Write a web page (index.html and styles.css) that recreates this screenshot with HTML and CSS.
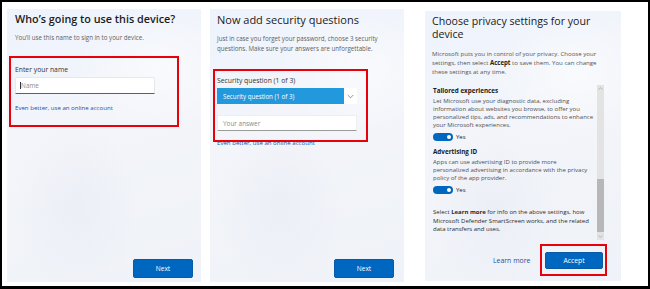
FILE: index.html
```html
<!DOCTYPE html>
<html>
<head>
<meta charset="utf-8">
<link rel="stylesheet" href="styles.css">
</head>
<body>
<div class="frame">
  <section class="panel p1">
    <h1 class="title t1">Who’s going to use this device?</h1>
    <p class="sub s1">You’ll use this name to sign in to your device.</p>
    <div class="field1">
      <label class="label">Enter your name</label>
      <div class="input active"><span class="caret"></span><span class="ph">Name</span></div>
      <a class="link">Even better, use an online account</a>
    </div>
    <div class="foot"><button class="btn">Next</button></div>
    <div class="hl hl1"></div>
  </section>

  <section class="panel p2">
    <h1 class="title t2">Now add security questions</h1>
    <p class="sub s2">Just in case you forget your password, choose 3 security<br>questions. Make sure your answers are unforgettable.</p>
    <div class="field2">
      <label class="label">Security question (1 of 3)</label>
      <div class="select">
        <span class="sel-val">Security question (1 of 3)</span>
        <span class="sel-chev"><svg width="7" height="5" viewBox="0 0 7 5"><path d="M0.7 1 L3.5 3.8 L6.3 1" fill="none" stroke="#777" stroke-width="0.8"/></svg></span>
      </div>
      <div class="input answer"><span class="ph">Your answer</span></div>
      <a class="link l2">Even better, use an online account</a>
    </div>
    <div class="foot"><button class="btn">Next</button></div>
    <div class="hl hl2"></div>
  </section>

  <section class="panel p3">
    <h1 class="title t3">Choose privacy settings for your<br>device</h1>
    <p class="sub s3">Microsoft puts you in control of your privacy. Choose your<br>settings, then select <b>Accept</b> to save them. You can change<br>these settings at any time.</p>
    <div class="scroll">
      <div class="scroll-content">
        <h2 class="opt-title">Tailored experiences</h2>
        <p class="opt-desc">Let Microsoft use your diagnostic data, excluding<br>information about websites you browse, to offer you<br>personalized tips, ads, and recommendations to enhance<br>your Microsoft experiences.</p>
        <div class="toggle-row"><span class="toggle"><span class="knob"></span></span><span class="yes">Yes</span></div>
        <h2 class="opt-title ad">Advertising ID</h2>
        <p class="opt-desc">Apps can use advertising ID to provide more<br>personalized advertising in accordance with the privacy<br>policy of the app provider.</p>
        <div class="toggle-row"><span class="toggle"><span class="knob"></span></span><span class="yes">Yes</span></div>
        <p class="note">Select <b>Learn more</b> for info on the above settings, how<br>Microsoft Defender SmartScreen works, and the related<br>data transfers and uses.</p>
      </div>
      <div class="scrollbar">
        <span class="arrow up"><svg width="5" height="3" viewBox="0 0 5 3"><path d="M0.5 2.6 L2.5 0.6 L4.5 2.6" fill="none" stroke="#999" stroke-width="0.6"/></svg></span>
        <span class="track"></span>
        <span class="thumb"></span>
        <span class="arrow down"><svg width="5" height="3" viewBox="0 0 5 3"><path d="M0.5 0.4 L2.5 2.4 L4.5 0.4" fill="none" stroke="#999" stroke-width="0.6"/></svg></span>
      </div>
    </div>
    <div class="foot3">
      <a class="learn">Learn more</a>
      <button class="btn accept">Accept</button>
    </div>
    <div class="hl hl3"></div>
  </section>
</div>
</body>
</html>
```

FILE: styles.css
```css
* { box-sizing: border-box; margin: 0; padding: 0; }
html, body { width: 650px; height: 289px; background: #fff; }
body {
  font-family: "Open Sans", "Noto Sans", sans-serif;
  color: #1b1b1b;
  overflow: hidden;
}
.frame {
  width: 650px;
  height: 289px;
  border: 2px solid #000;
  border-bottom-width: 3px;
  display: flex;
  align-items: flex-start;
  padding-left: 5px;
}
.panel {
  position: relative;
  display: flex;
  flex-direction: column;
  background:
    radial-gradient(ellipse 120px 90px at 150px 60px, rgba(255,255,255,0.55), rgba(255,255,255,0) 70%),
    radial-gradient(ellipse 90px 120px at 70px 200px, rgba(235,238,245,0.9), rgba(235,238,245,0) 70%),
    linear-gradient(160deg, #eef3fc 0%, #f3f5fa 45%, #eff2f8 100%);
}
.p1 { width: 194px; height: 273px; margin-top: 7px; padding: 0 8px 4px 8px; }
.p2 { width: 194px; height: 273px; margin-top: 7px; margin-left: 9px; padding: 0 10px 4px 7px; }
.p3 { width: 196px; height: 270px; margin-top: 9px; margin-left: 21px; padding: 0 17px 0 7px; }

.title { font-weight: 600; color: #1a1a1a; letter-spacing: 0; white-space: nowrap; }
.t1 { font-size: 10.8px; line-height: 13px; margin-top: 3px; }
.t2 { font-size: 11px; line-height: 14px; margin-top: 4px; font-weight: 500; }
.t3 { font-size: 10.6px; line-height: 13px; margin-top: 4px; font-weight: 500; }

.sub { color: #606060; font-size: 6.2px; white-space: nowrap; }
.s1 { margin-top: 9px; line-height: 8px; }
.s2 { margin-top: 7px; line-height: 10px; }
.s3 { margin-top: 8px; line-height: 9px; font-size: 6.1px; color: #555; }
.sub b { color: #222; }

.label { display: block; font-size: 6.8px; line-height: 9px; color: #333; }
.field1 { margin-top: 23px; }
.input {
  background: #fff;
  border: 1px solid #e6e8ec;
  border-bottom: 1px solid #8a8a8a;
  display: flex;
  align-items: center;
  padding-left: 4px;
  font-size: 6.4px;
  color: #8a8a8a;
}
.field1 .input { width: 140px; height: 17px; margin-top: 3px; border-bottom: 1.5px solid #1a6fc4; border-radius: 2px 2px 0 0; }
.caret { width: 0.6px; height: 7px; background: #333; margin-right: 0.5px; }
.link { display: block; color: #1950a0; font-size: 6.1px; line-height: 8px; white-space: nowrap; }
.field1 .link { margin-top: 10px; }

.field2 { margin-top: 22px; }
.select { display: flex; width: 140px; height: 16px; margin-top: 3px; }
.sel-val {
  flex: 1;
  background: #2299dc;
  color: #fff;
  font-size: 6.2px;
  display: flex;
  align-items: center;
  padding-left: 6px;
}
.sel-chev { width: 13px; background: #fff; display: flex; align-items: center; justify-content: center; }
.answer { width: 140px; height: 16px; margin-top: 11px; padding-left: 5px; border-color: #eceef2; border-bottom-color: #9a9a9a; }
.l2 { margin-top: 8px; }

.foot { margin-top: auto; display: flex; justify-content: flex-end; }
.btn {
  width: 60px;
  height: 19px;
  background: #0067c0;
  color: #fff;
  border: 1px solid #0a5aa6;
  border-radius: 2px;
  font-family: inherit;
  font-size: 6.6px;
}

.scroll { display: flex; margin-top: 9px; height: 155px; }
.scroll-content { flex: 1; padding-left: 1px; min-width: 0; white-space: nowrap; }
.opt-title { font-size: 6.3px; font-weight: 700; line-height: 8px; margin-top: 2px; color: #1a1a1a; }
.opt-title.ad { margin-top: 7px; }
.opt-desc { font-size: 6px; line-height: 8px; color: #505050; margin-top: 2px; }
.toggle-row { display: flex; align-items: center; margin-top: 4px; height: 8px; }
.toggle { width: 20px; height: 8px; border-radius: 4px; background: #0067c0; position: relative; display: block; }
.knob { position: absolute; right: 2.5px; top: 2px; width: 4px; height: 4px; border-radius: 50%; background: #fff; }
.yes { font-size: 6px; margin-left: 3px; color: #1a1a1a; }
.note { font-size: 6px; line-height: 8.5px; color: #2a2a2a; margin-top: 14px; }

.scrollbar { width: 7px; flex: none; display: flex; flex-direction: column; background: #e3e3e3; margin-left: 2px; }
.arrow { height: 8px; display: flex; align-items: center; justify-content: center; }
.track { height: 87px; }
.thumb { height: 53px; background: #b7b7b7; }

.foot3 { display: flex; align-items: center; margin-top: auto; margin-bottom: 12px; margin-right: 1px; }
.learn { margin-left: 61px; font-size: 6.9px; color: #1950a0; }
.accept { margin-left: auto; width: 58px; height: 17px; font-size: 6.8px; }

.hl { position: absolute; border: 2px solid #e8000b; pointer-events: none; }
.hl1 { left: 2px; top: 47px; width: 170px; height: 71px; }
.hl2 { left: 3px; top: 60px; width: 155px; height: 73px; }
.hl3 { left: 115px; top: 233px; width: 67px; height: 32px; }
```
